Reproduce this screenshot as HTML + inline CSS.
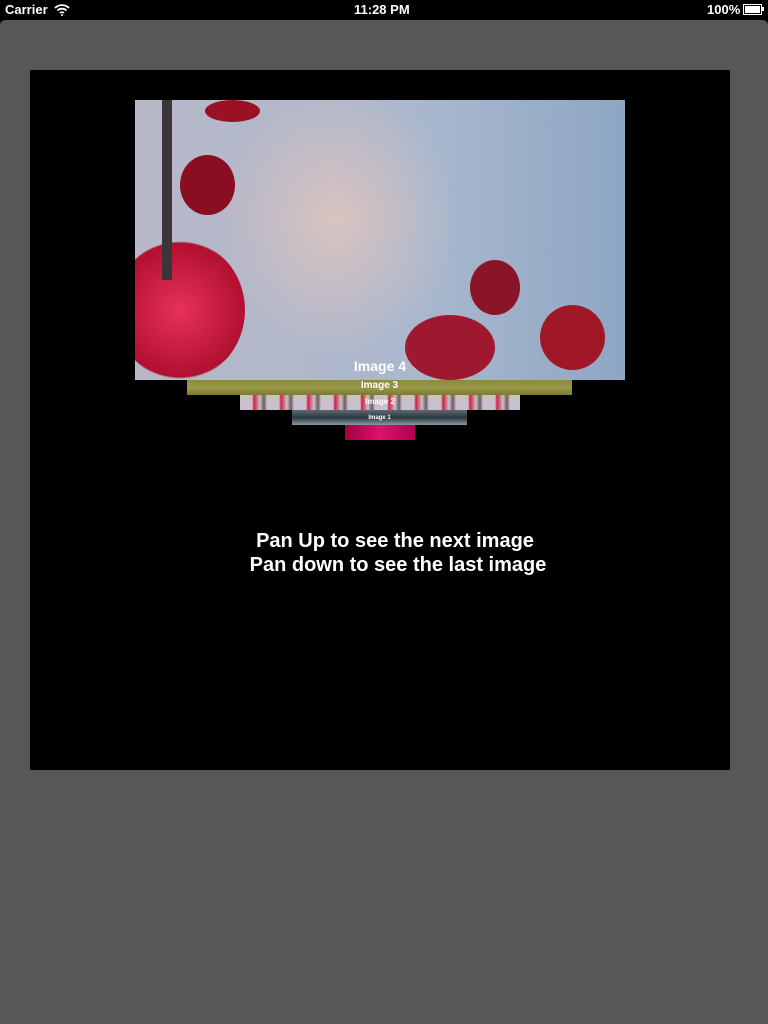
<!DOCTYPE html>
<html><head><style>
body{margin:0;width:768px;height:1024px;background:#000;position:relative;overflow:hidden;font-family:"Liberation Sans",Arial,sans-serif}
.sb{position:absolute;top:0;left:0;width:768px;height:20px;color:#fff;font-size:13px;font-weight:bold}
.bg{position:absolute;top:20px;left:0;width:768px;height:1004px;background:#575757;border-radius:5px 5px 0 0}
.stage{position:absolute;left:30px;top:70px;width:700px;height:700px;background:#000}
.a{position:absolute;overflow:hidden;color:#fff;font-weight:bold;text-align:center}
.t{position:absolute;left:0;right:0;text-align:center;color:#fff;font-weight:bold}
</style></head><body>
<div class="sb">
<span style="position:absolute;left:5px;top:2px">Carrier</span>
<svg style="position:absolute;left:54px;top:3px" width="16" height="13" viewBox="0 0 16 13"><path d="M1 5a10 10 0 0 1 14 0M3.5 7.5a6.5 6.5 0 0 1 9 0M6 10a3 3 0 0 1 4 0" stroke="#fff" stroke-width="1.8" fill="none"/><circle cx="8" cy="12" r="1" fill="#fff"/></svg>
<span style="position:absolute;left:354px;top:2px">11:28 PM</span>
<span style="position:absolute;left:707px;top:2px">100%</span>
<div style="position:absolute;left:743px;top:4px;width:17px;height:9px;border:1px solid #fff;background:#fff;box-shadow:inset 0 0 0 1px #000"></div>
<div style="position:absolute;left:762px;top:7px;width:2px;height:4px;background:#fff"></div>
</div>
<div class="bg"></div>
<div class="stage"></div>
<div class="a" style="left:135px;top:100px;width:490px;height:280px;background:radial-gradient(ellipse 120px 140px at 200px 120px,#d8c3c0,transparent),linear-gradient(90deg,#b8b8c8,#a9b7cd 60%,#8ea6c4)">
<div style="position:absolute;left:-20px;top:140px;width:130px;height:140px;border-radius:50%;background:radial-gradient(circle,#e8305a,#b01030 70%,transparent 72%)"></div>
<div style="position:absolute;left:45px;top:55px;width:55px;height:60px;border-radius:50%;background:#8a0e22"></div>
<div style="position:absolute;left:70px;top:0;width:55px;height:22px;border-radius:50%;background:#9a1025"></div>
<div style="position:absolute;left:27px;top:0;width:10px;height:180px;background:#3a3538"></div>
<div style="position:absolute;left:270px;top:215px;width:90px;height:65px;border-radius:50%;background:#a01830"></div>
<div style="position:absolute;left:335px;top:160px;width:50px;height:55px;border-radius:50%;background:#8a1428"></div>
<div style="position:absolute;left:405px;top:205px;width:65px;height:65px;border-radius:50%;background:#a01828"></div>
<div class="t" style="top:258px;font-size:14px">Image 4</div>
</div>
<div class="a" style="left:187px;top:380px;width:385px;height:15px;background:linear-gradient(#8a8a40,#9a9848 50%,#7c7a34)"><div class="t" style="top:0;font-size:10px">Image 3</div></div>
<div class="a" style="left:240px;top:395px;width:280px;height:15px;background:repeating-linear-gradient(90deg,#c8c0cc 0,#c8c0cc 12px,#d02040 14px,#c8c0cc 20px,#6a5a60 24px,#c8c0cc 27px)"><div class="t" style="top:2px;font-size:8px">Image 2</div></div>
<div class="a" style="left:292px;top:410px;width:175px;height:15px;background:linear-gradient(#5a6a70,#2a3a40 50%,#8898a0)"><div class="t" style="top:5px;font-size:6px">Image 1</div></div>
<div class="a" style="left:345px;top:425px;width:70px;height:15px;background:linear-gradient(90deg,#a00040,#e01070,#b00050)"></div>
<div class="t" style="top:529px;left:11px;right:-11px;font-size:20px;line-height:24px">Pan Up to see the next image</div>
<div class="t" style="top:553px;left:14px;right:-14px;font-size:20px;line-height:24px">Pan down to see the last image</div>
</body></html>
